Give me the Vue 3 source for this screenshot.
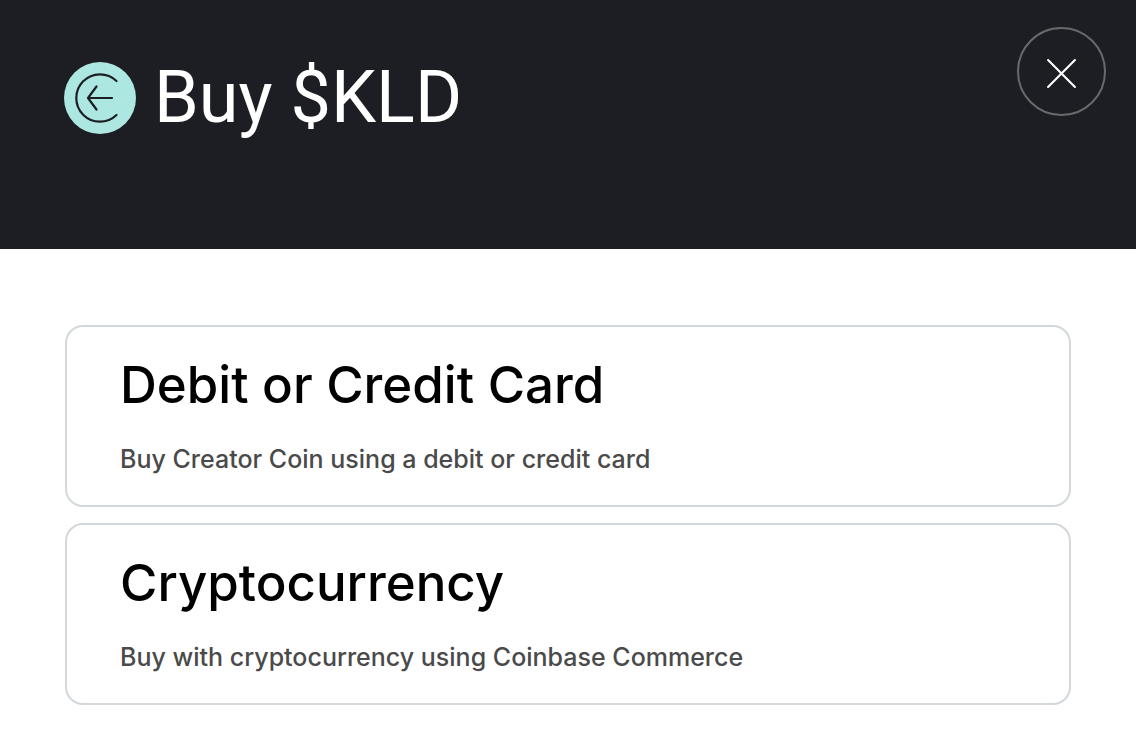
<script setup>
const options = [
  {
    id: 'card',
    title: 'Debit or Credit Card',
    description: 'Buy Creator Coin using a debit or credit card',
  },
  {
    id: 'crypto',
    title: 'Cryptocurrency',
    description: 'Buy with cryptocurrency using Coinbase Commerce',
  },
]
</script>

<template>
  <main class="dialog">
    <header class="header">
      <div class="brand">
        <svg class="logo" viewBox="0 0 72 72" aria-hidden="true">
          <circle cx="36" cy="36" r="36" fill="#ace8e1" />
          <g fill="none" stroke="#1d1e23" stroke-width="2.2" stroke-linecap="round" stroke-linejoin="round">
            <path d="M52.5 19A23.7 23.7 0 1 0 52.5 53" />
            <path d="M48 36H24.5M32.5 24.5L24 36L32.5 47.5" />
          </g>
        </svg>
        <h1 class="title">Buy $KLD</h1>
      </div>
      <button class="close" type="button" aria-label="Close">
        <svg class="cross" viewBox="0 0 30 30" aria-hidden="true">
          <path d="M2 2L28 28M28 2L2 28" fill="none" stroke="#fff" stroke-width="2" stroke-linecap="round" />
        </svg>
      </button>
    </header>
    <section class="options">
      <button v-for="option in options" :key="option.id" class="option" type="button">
        <span class="option-title">{{ option.title }}</span>
        <span class="option-text">{{ option.description }}</span>
      </button>
    </section>
  </main>
</template>

<style>
body {
  margin: 0;
  background: #fff;
}
</style>

<style scoped>
.dialog {
  font-family: Inter, "Liberation Sans", sans-serif;
}

.header {
  display: flex;
  justify-content: space-between;
  align-items: flex-start;
  box-sizing: border-box;
  min-height: 249px;
  padding: 27px 30px 27px 64px;
  background: #1d1e23;
}

.brand {
  display: flex;
  align-items: center;
  gap: 18px;
  padding-top: 31px;
}

.logo {
  width: 72px;
  height: 72px;
}

.title {
  margin: 0;
  font-family: Roboto, "Liberation Sans", sans-serif;
  font-size: 72px;
  font-weight: 400;
  line-height: 80px;
  color: #fff;
}

.close {
  display: flex;
  align-items: center;
  justify-content: center;
  box-sizing: border-box;
  width: 89px;
  height: 89px;
  padding: 4px 0 0;
  border: 2px solid #68696d;
  border-radius: 50%;
  background: transparent;
  cursor: pointer;
}

.cross {
  width: 31px;
  height: 31px;
}

.options {
  display: flex;
  flex-direction: column;
  gap: 16px;
  padding: 76px 65px 24px;
}

.option {
  display: flex;
  flex-direction: column;
  gap: 26px;
  padding: 26px 53px 30px;
  border: 2px solid #d2d8db;
  border-radius: 18px;
  background: #fff;
  font-family: inherit;
  font-weight: 500;
  text-align: left;
  cursor: pointer;
}

.option-title {
  font-size: 51px;
  line-height: 64px;
  color: #000;
}

.option-text {
  font-size: 25px;
  line-height: 32px;
  color: #4a4a4a;
}
</style>
